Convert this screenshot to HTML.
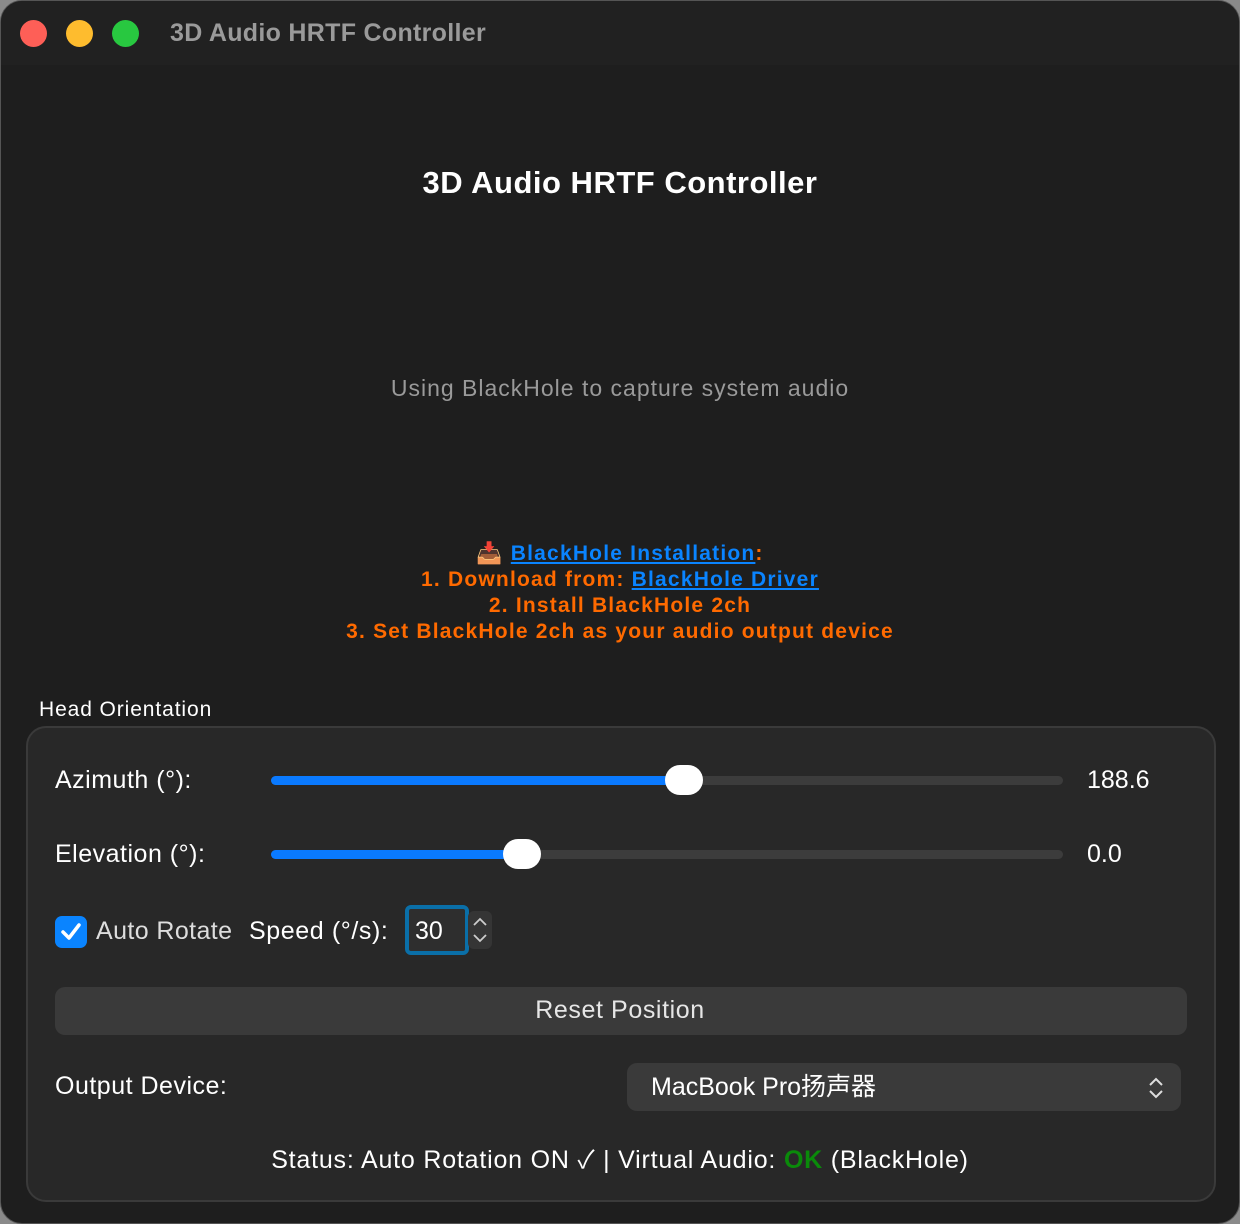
<!DOCTYPE html>
<html><head><meta charset="utf-8"><style>
*{margin:0;padding:0;box-sizing:border-box}
body{width:1240px;height:1224px;background:#8a8a8a;font-family:"Liberation Sans","Noto Sans CJK SC",sans-serif;position:relative;overflow:hidden}
.win{position:absolute;left:0;top:0;width:1240px;height:1224px;background:#1e1e1e;border-radius:22px;border:1px solid #555;overflow:hidden}
.tb{position:absolute;left:0;top:0;width:100%;height:64px;background:#212121}
.dot{position:absolute;top:19px;width:27px;height:27px;border-radius:50%}
.t{position:absolute;white-space:nowrap}
.c{left:0;width:100%;text-align:center}
.box{position:absolute;left:25px;top:725px;width:1190px;height:476px;background:#282828;border:2px solid #3a3a3a;border-radius:20px}
.track{position:absolute;left:270px;width:792px;height:9px;border-radius:5px;background:#3c3c3c}
.fill{position:absolute;left:0;top:0;height:9px;border-radius:5px;background:#0a7aff}
.knob{position:absolute;width:38px;height:30px;border-radius:15px;background:#fff;top:-11px}
.lbl{font-size:25px;color:#fff}
a{color:#0a84ff;text-decoration:underline}
</style></head><body>
<div class="win">
<div class="tb"></div>
<div class="dot" style="left:19px;background:#fe5f57"></div>
<div class="dot" style="left:65px;background:#febc2e"></div>
<div class="dot" style="left:111px;background:#28c840"></div>
<div class="t" style="left:169px;top:18px;font-size:25px;font-weight:bold;color:#9a9a9a;letter-spacing:0.3px">3D Audio HRTF Controller</div>
<div class="t c" style="top:164px;font-size:31px;font-weight:bold;color:#fff;letter-spacing:0.5px">3D Audio HRTF Controller</div>
<div class="t c" style="top:374px;font-size:23px;color:#9a9a9a;letter-spacing:1px">Using BlackHole to capture system audio</div>
<div class="t c" style="top:540px;font-size:21px;font-weight:bold;color:#ff6a00;line-height:26px;letter-spacing:1.2px">📥 <a>BlackHole Installation</a>:<br>1. Download from: <a>BlackHole Driver</a><br>2. Install BlackHole 2ch<br>3. Set BlackHole 2ch as your audio output device</div>
<div class="t" style="left:38px;top:697px;font-size:21px;color:#fff;letter-spacing:0.9px">Head Orientation</div>
<div class="box"></div>
<div class="t lbl" style="left:54px;top:765px;letter-spacing:0.5px">Azimuth (°):</div>
<div class="track" style="top:775px"><div class="fill" style="width:413px"></div><div class="knob" style="left:394px"></div></div>
<div class="t lbl" style="left:1086px;top:765px">188.6</div>
<div class="t lbl" style="left:54px;top:839px;letter-spacing:0.5px">Elevation (°):</div>
<div class="track" style="top:849px"><div class="fill" style="width:251px"></div><div class="knob" style="left:232px"></div></div>
<div class="t lbl" style="left:1086px;top:839px">0.0</div>
<div style="position:absolute;left:54px;top:915px;width:32px;height:32px;border-radius:7px;background:#0a84ff"><svg width="32" height="32"><path d="M8 16l6 6 10-13" stroke="#fff" stroke-width="3.5" fill="none" stroke-linecap="round" stroke-linejoin="round"/></svg></div>
<div class="t lbl" style="left:95px;top:916px;color:#ddd;letter-spacing:0.4px">Auto Rotate</div>
<div class="t lbl" style="left:248px;top:916px;letter-spacing:0.6px">Speed (°/s):</div>
<div style="position:absolute;left:404px;top:904px;width:64px;height:50px;border:4px solid #0a6fa8;border-radius:6px;background:#2e2e2e"></div>
<div class="t lbl" style="left:414px;top:916px">30</div>
<div style="position:absolute;left:467px;top:910px;width:24px;height:38px;border-radius:6px;background:#353535"><svg width="24" height="38"><path d="M6 14l6-6 6 6M6 24l6 6 6-6" stroke="#ccc" stroke-width="1.8" fill="none"/></svg></div>
<div style="position:absolute;left:54px;top:986px;width:1132px;height:48px;border-radius:10px;background:#3a3a3a"></div>
<div class="t c lbl" style="top:995px;color:#e6e6e6;letter-spacing:0.6px">Reset Position</div>
<div class="t lbl" style="left:54px;top:1071px;letter-spacing:0.5px">Output Device:</div>
<div style="position:absolute;left:626px;top:1062px;width:554px;height:48px;border-radius:10px;background:#3a3a3a"></div>
<div class="t lbl" style="left:650px;top:1066px">MacBook Pro扬声器</div>
<svg style="position:absolute;left:1145px;top:1074px" width="20" height="26"><path d="M4 10l6-6 6 6M4 16l6 6 6-6" stroke="#ddd" stroke-width="2" fill="none"/></svg>
<div class="t c lbl" style="top:1139px;letter-spacing:0.8px">Status: Auto Rotation ON ✓ | Virtual Audio: <b style="color:#0a8a0a">OK</b> (BlackHole)</div>
</div>
</body></html>
